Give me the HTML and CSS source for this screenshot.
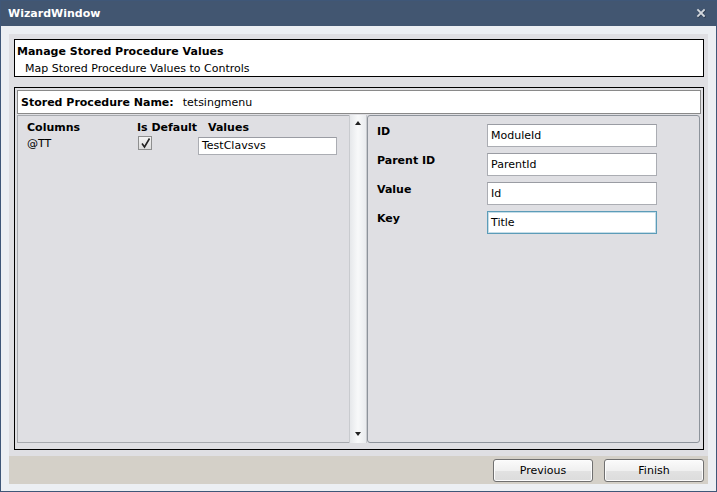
FILE: index.html
```html
<!DOCTYPE html>
<html>
<head>
<meta charset="utf-8">
<link rel="stylesheet" href="styles.css">
</head>
<body>
<div class="window">
  <div class="titlebar">
    <span class="title">WizardWindow</span>
    <svg class="close" width="10" height="10" viewBox="0 0 10 10"><path d="M2 2 L8 8 M8 2 L2 8" stroke="#2e3d52" stroke-width="2.4" stroke-linecap="square" transform="translate(0.6,0.6)"/><path d="M2 2 L8 8 M8 2 L2 8" stroke="#d3d8de" stroke-width="1.8" stroke-linecap="square"/></svg>
  </div>
  <div class="main">
    <div class="content">
      <div class="header-box">
        <div class="h-title">Manage Stored Procedure Values</div>
        <div class="h-sub">Map Stored Procedure Values to Controls</div>
      </div>
      <div class="sp-box">
        <div class="name-bar"><b>Stored Procedure Name:</b><span class="name-val">tetsingmenu</span></div>
        <div class="panels">
          <div class="left-panel">
            <div class="grid">
              <div class="gh c1">Columns</div>
              <div class="gh c2">Is Default</div>
              <div class="gh c3">Values</div>
              <div class="gc c1 tt">@TT</div>
              <div class="gc c2"><span class="check"><svg width="11" height="11" viewBox="0 0 11 11"><path d="M2 5.5 L4.5 9 L9.5 0.5" fill="none" stroke="#222" stroke-width="1.6"/></svg></span></div>
              <div class="gc c3"><div class="tb small">TestClavsvs</div></div>
            </div>
          </div>
          <div class="scrollbar">
            <span class="arrow up"></span>
            <span class="arrow down"></span>
          </div>
          <div class="right-panel">
            <div class="frow"><span class="lbl">ID</span><div class="tb">ModuleId</div></div>
            <div class="frow"><span class="lbl">Parent ID</span><div class="tb">ParentId</div></div>
            <div class="frow"><span class="lbl">Value</span><div class="tb">Id</div></div>
            <div class="frow"><span class="lbl">Key</span><div class="tb focus">Title</div></div>
          </div>
        </div>
      </div>
    </div>
    <div class="footer">
      <button class="btn">Previous</button>
      <button class="btn">Finish</button>
    </div>
  </div>
</div>
</body>
</html>
```
FILE: styles.css
```css
* { box-sizing: border-box; }
html, body { margin: 0; padding: 0; }
body {
  font-family: "DejaVu Sans", Verdana, sans-serif;
  font-size: 11px;
  color: #000;
  background: #fff;
}
.window {
  width: 717px;
  height: 492px;
  border: 1px solid #3f5778;
  background: #eceff3;
  display: flex;
  flex-direction: column;
}
.titlebar {
  height: 25px;
  flex: none;
  background: #425671;
  color: #fff;
  display: flex;
  align-items: center;
  justify-content: space-between;
  padding: 0 10px 0 7px;
}
.title {
  font-weight: bold;
  font-size: 11px;
}
.close { display: block; margin-top: -1px; }
.main {
  flex: 1;
  display: flex;
  flex-direction: column;
  padding: 8px 8px 7px 8px;
}
.content {
  flex: 1;
  background: #dfdfe3;
  padding: 5px 4px 6px 5px;
  display: flex;
  flex-direction: column;
  gap: 10px;
}
.header-box {
  height: 38px;
  flex: none;
  background: #fff;
  border: 1px solid #000;
  padding: 3px 2px 0 2px;
}
.h-title {
  font-weight: bold;
  line-height: 17px;
}
.h-sub {
  padding-left: 8px;
  line-height: 17px;
}
.sp-box {
  flex: 1;
  border: 1px solid #000;
  padding: 2px 2px 6px 2px;
  display: flex;
  flex-direction: column;
  gap: 1px;
}
.name-bar {
  height: 24px;
  flex: none;
  background: #fff;
  border: 1px solid #8a8a8a;
  display: flex;
  align-items: center;
  padding-left: 3px;
}
.name-val { margin-left: 9px; }
.panels {
  flex: 1;
  display: flex;
  margin-right: 1px;
}
.left-panel {
  width: 332px;
  border: 1px solid #a6a9ae;
  border-right: none;
  padding: 4px 0 0 9px;
}
.grid {
  display: grid;
  grid-template-columns: 110px 61px 139px;
  grid-template-rows: 14px 20px;
  align-items: start;
}
.gh { font-weight: bold; line-height: 14px; padding-top: 1px; }
.gh.c3 { padding-left: 10px; }
.gc { line-height: 14px; }
.tt { padding-top: 3px; }
.gc.c2 { padding-top: 2px; padding-left: 1px; }
.check {
  display: flex;
  align-items: center;
  justify-content: center;
  width: 14px;
  height: 14px;
  border: 1px solid #8e8f8f;
  background: linear-gradient(#f4f4f4, #dcdcdc);
}
.gc.c3 { padding-top: 3px; }
.tb {
  width: 170px;
  height: 23px;
  background: #fff;
  border: 1px solid #abadb3;
  border-top-color: #9a9ca3;
  display: flex;
  align-items: center;
  padding-left: 3px;
  font-size: 11px;
}
.tb.small { width: 139px; height: 18px; }
.tb.focus { border-color: #5c9cb8; box-shadow: inset 0 0 0 1px #c5dde8; }
.scrollbar {
  width: 18px;
  border-left: 1px solid #c9cbcf;
  border-right: 1px solid #c9cbcf;
  background: linear-gradient(90deg, #e6e8eb, #f8f9fa 50%, #e9ebee);
  display: flex;
  flex-direction: column;
  justify-content: space-between;
  align-items: center;
  padding: 6px 0 7px 0;
}
.arrow {
  width: 0;
  height: 0;
  border-left: 3.5px solid transparent;
  border-right: 3.5px solid transparent;
}
.arrow.up { border-bottom: 4px solid #222; }
.arrow.down { border-top: 4px solid #222; }
.right-panel {
  flex: 1;
  border: 1px solid #8d939b;
  border-radius: 3px;
  padding: 8px 0 0 9px;
  display: flex;
  flex-direction: column;
  gap: 6px;
}
.frow {
  display: flex;
  align-items: flex-start;
  height: 23px;
}
.lbl {
  width: 110px;
  font-weight: bold;
  line-height: 14px;
  padding-top: 1px;
}
.footer {
  height: 28px;
  flex: none;
  background: #d4d0c8;
  display: flex;
  justify-content: flex-end;
  align-items: center;
  gap: 11px;
  padding: 1px 4px 0 0;
}
.btn {
  width: 100px;
  height: 23px;
  border: 1px solid #707070;
  border-radius: 3px;
  background: linear-gradient(#fbfbfb, #f0f0f0 50%, #e2e2e2 51%, #dcdcdc);
  font-family: "DejaVu Sans", Verdana, sans-serif;
  font-size: 11px;
  color: #000;
  padding: 0;
  box-shadow: inset 0 0 0 1px #fcfcfc;
}
```
